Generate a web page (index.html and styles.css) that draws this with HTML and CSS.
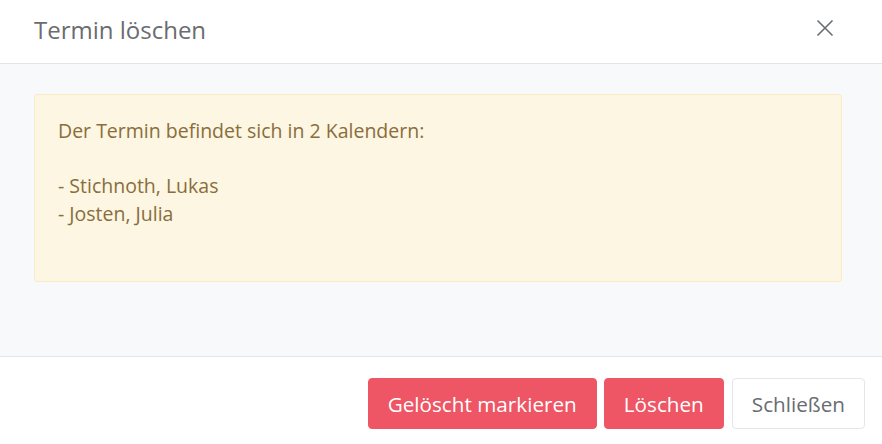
FILE: index.html
```html
<!DOCTYPE html>
<html lang="de">
<head>
<meta charset="utf-8">
<title>Termin löschen</title>
<link rel="stylesheet" href="styles.css">
</head>
<body>
<div class="modal">
  <div class="modal-header">
    <h4 class="modal-title">Termin löschen</h4>
    <button class="close" aria-label="Schließen">
      <svg width="18" height="18" viewBox="0 0 18 18"><path d="M1.5 1.5 L16.5 16.5 M16.5 1.5 L1.5 16.5" stroke="#6b6d70" stroke-width="1.6" fill="none"/></svg>
    </button>
  </div>
  <div class="modal-body">
    <div class="alert">Der Termin befindet sich in 2 Kalendern:<br><br>- Stichnoth, Lukas<br>- Josten, Julia<br><br></div>
  </div>
  <div class="modal-footer">
    <button class="btn btn-danger">Gelöscht markieren</button>
    <button class="btn btn-danger">Löschen</button>
    <button class="btn btn-default">Schließen</button>
  </div>
</div>
</body>
</html>
```
FILE: styles.css
```css
html, body {
  margin: 0;
  padding: 0;
  background: #fff;
}
body {
  font-family: "Open Sans", "Noto Sans", sans-serif;
  width: 882px;
  height: 444px;
  overflow: hidden;
}
.modal {
  display: flex;
  flex-direction: column;
}
.modal-header {
  height: 63px;
  border-bottom: 1px solid #e4e5e7;
  display: flex;
  align-items: center;
  justify-content: space-between;
  padding: 0 48px 0 34px;
}
.modal-title {
  margin: 0;
  font-size: 24px;
  font-weight: 400;
  color: #6a6c6f;
  line-height: 1;
  position: relative;
  top: -2px;
}
.close {
  border: 0;
  background: none;
  padding: 0;
  width: 18px;
  height: 18px;
  display: flex;
  cursor: pointer;
  position: relative;
  top: -4px;
}
.modal-body {
  background: #f7f9fa;
  height: 293px;
  box-sizing: border-box;
  padding: 30px 40px 0 34px;
  border-bottom: 1px solid #e4e5e7;
}
.alert {
  background: #fcf6e3;
  border: 1px solid #f9ebc6;
  border-radius: 3px;
  color: #8a6d3b;
  font-size: 19.5px;
  line-height: 27.5px;
  padding: 22px 23px 26px 23px;
}
.modal-footer {
  display: flex;
  justify-content: flex-end;
  gap: 7px;
  padding: 21px 17px 0 0;
}
.btn {
  font-family: "Open Sans", "Noto Sans", sans-serif;
  font-size: 20.7px;
  height: 51px;
  padding: 0 19px;
  border-radius: 4px;
  border: 1px solid transparent;
  cursor: pointer;
}
.btn-danger {
  background: #ee5565;
  color: #fff;
  border-color: #ee5565;
}
.btn-default {
  background: #fff;
  color: #6a6c6f;
  border-color: #e4e6e8;
  margin-left: 1px;
}
```
